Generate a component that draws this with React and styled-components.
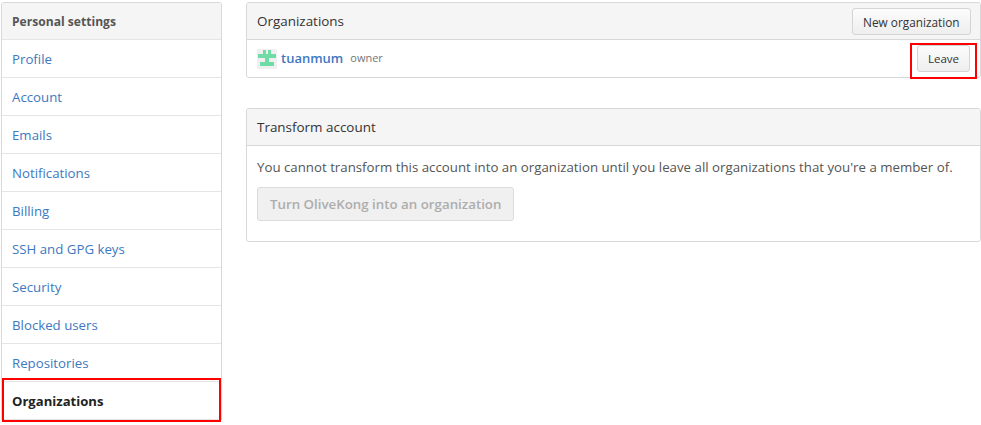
import React from 'react'
import styled, { createGlobalStyle } from 'styled-components'

const GlobalStyle = createGlobalStyle`
  html, body {
    margin: 0;
    background: #fff;
    overflow: hidden;
  }
  body {
    font-family: "Open Sans", "Noto Sans", "Liberation Sans", sans-serif;
    font-size: 13px;
    color: #333;
  }
`

const Page = styled.div`
  display: flex;
  align-items: flex-start;
  gap: 24px;
  width: 981px;
  height: 425px;
  padding: 2px 0 0 1px;
  box-sizing: border-box;
  overflow: hidden;
`

const Menu = styled.nav`
  width: 221px;
  flex: none;
  border: 1px solid #d8d8d8;
  border-bottom: 0;
  border-radius: 3px 3px 0 0;
  box-sizing: border-box;
`

const MenuHeading = styled.div`
  height: 36px;
  padding: 0 10px;
  display: flex;
  align-items: center;
  background: #f5f5f5;
  border-bottom: 1px solid #e5e5e5;
  font-size: 12.1px;
  font-weight: 700;
  color: #555;
`

const MenuItem = styled.a`
  position: relative;
  height: 38px;
  padding: 0 10px;
  display: flex;
  align-items: center;
  box-sizing: border-box;
  border-bottom: 1px solid #e5e5e5;
  font-size: ${p => (p.$selected ? 13.1 : 13.25)}px;
  font-weight: ${p => (p.$selected ? 700 : 400)};
  color: ${p => (p.$selected ? '#222' : '#4078c0')};
`

const Highlight = styled.span`
  position: absolute;
  box-sizing: border-box;
  border: 2px solid #f00;
  pointer-events: none;
`

const MenuHighlight = styled(Highlight)`
  left: 0;
  right: 0;
  top: -4px;
  height: 44px;
`

const Main = styled.main`
  width: 735px;
  flex: none;
  display: flex;
  flex-direction: column;
  gap: 30px;
`

const Panel = styled.section`
  border: 1px solid #d8d8d8;
  border-radius: 3px;
`

const PanelHeader = styled.div`
  height: 36px;
  padding: 0 9px 0 10px;
  display: flex;
  align-items: center;
  justify-content: space-between;
  background: #f5f5f5;
  border-bottom: 1px solid #d8d8d8;
  border-radius: 3px 3px 0 0;
  font-size: 13.45px;
  color: #333;
`

const Button = styled.button`
  display: block;
  font-family: inherit;
  font-size: 11.8px;
  font-weight: 500;
  color: #333;
  height: 27px;
  padding: 0 10.5px;
  background: linear-gradient(#fcfcfc, #eee);
  border: 1px solid #d5d5d5;
  border-radius: 3px;
`

const HeaderButton = styled(Button)`
  margin-top: 1px;
`

const LeaveButton = styled(Button)`
  width: 53px;
  padding: 0;
  font-size: 11.5px;
`

const OrgRow = styled.div`
  height: 37px;
  padding: 0 10px;
  display: flex;
  align-items: center;
`

const OrgName = styled.a`
  margin: 0 0 2px 4px;
  font-size: 13px;
  font-weight: 600;
  color: #4078c0;
`

const OrgRole = styled.span`
  margin: 0 0 2px 7px;
  font-size: 11px;
  color: #767676;
`

const RowAction = styled.div`
  margin-left: auto;
  position: relative;
`

const ActionHighlight = styled(Highlight)`
  right: -7px;
  top: -2px;
  width: 67px;
  height: 36px;
`

const PanelBody = styled.div`
  padding: 11px 10px 20px;
`

const Notice = styled.p`
  margin: 0 0 10px;
  line-height: 20px;
  font-size: 13.27px;
  color: #555;
`

const DisabledButton = styled.button`
  display: block;
  height: 34px;
  padding: 0 12px;
  font-family: inherit;
  font-size: 13.3px;
  font-weight: 600;
  color: #adadad;
  background: #f0f0f0;
  border: 1px solid #dcdcdc;
  border-radius: 3px;
`

const Avatar = () => (
  <svg width="20" height="20" viewBox="0 0 20 20">
    <rect width="20" height="20" fill="#f0f0f0" />
    <path
      fill="#6fdca6"
      d="M6 1h3v4h2V1h3v4h5v4h-7v4h5v4H3v-4h5V9H1V5h5z"
    />
  </svg>
)

const links = [
  'Profile',
  'Account',
  'Emails',
  'Notifications',
  'Billing',
  'SSH and GPG keys',
  'Security',
  'Blocked users',
  'Repositories',
]

export default function App() {
  return (
    <>
      <GlobalStyle />
      <Page>
        <Menu>
          <MenuHeading>Personal settings</MenuHeading>
          {links.map(label => (
            <MenuItem key={label}>{label}</MenuItem>
          ))}
          <MenuItem $selected>
            Organizations
            <MenuHighlight />
          </MenuItem>
        </Menu>
        <Main>
          <Panel>
            <PanelHeader>
              Organizations
              <HeaderButton>New organization</HeaderButton>
            </PanelHeader>
            <OrgRow>
              <Avatar />
              <OrgName>tuanmum</OrgName>
              <OrgRole>owner</OrgRole>
              <RowAction>
                <LeaveButton>Leave</LeaveButton>
                <ActionHighlight />
              </RowAction>
            </OrgRow>
          </Panel>
          <Panel>
            <PanelHeader>Transform account</PanelHeader>
            <PanelBody>
              <Notice>
                You cannot transform this account into an organization until you leave all organizations that you're a member of.
              </Notice>
              <DisabledButton disabled>Turn OliveKong into an organization</DisabledButton>
            </PanelBody>
          </Panel>
        </Main>
      </Page>
    </>
  )
}
